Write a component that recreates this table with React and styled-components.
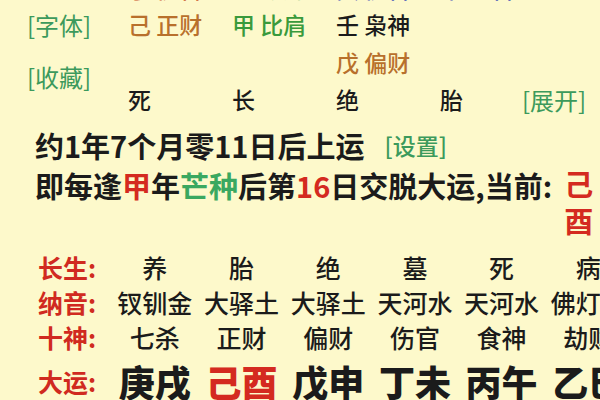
import React from "react";
import styled, { createGlobalStyle } from "styled-components";

const Global = createGlobalStyle`
  html, body { margin: 0; padding: 0; background: #fdf9cb; }
  body { overflow: hidden; }
`;

const Page = styled.div`
  width: 600px;
  height: 400px;
  overflow: hidden;
  background: #fdf9cb;
  font-family: "Noto Sans CJK SC", "Noto Sans", sans-serif;
  color: #1b1b1b;
`;

const PillarGrid = styled.div`
  display: grid;
  grid-template-columns: 101px 104px 104px 104px 80px 1fr;
  grid-template-rows: 26px 37.5px 37.5px 37.5px;
  padding-left: 27px;
  margin-top: -20px;
`;

const Cell = styled.div`
  grid-column: ${(p) => p.$col};
  grid-row: ${(p) => p.$row};
  font-size: 23px;
  line-height: ${(p) => (p.$cut ? "22px" : "37.5px")};
  align-self: ${(p) => (p.$cut ? "end" : "stretch")};
  margin-bottom: ${(p) => (p.$cut ? "7px" : "0")};
  font-weight: 500;
  white-space: nowrap;
  color: ${(p) => p.$color || "#1b1b1b"};
`;

const LinkTag = styled.div`
  grid-column: ${(p) => p.$col || 1};
  grid-row: ${(p) => p.$row};
  align-self: center;
  margin: ${(p) => p.$margin || "0"};
  font-size: 24px;
  line-height: 28px;
  color: #3c9a5c;
  white-space: nowrap;
`;

const Info = styled.div`
  padding-left: 35px;
  margin-top: 6px;
  font-size: 29px;
  font-weight: 700;
  line-height: 40px;
`;

const InfoLine = styled.div`
  display: flex;
  align-items: flex-start;
  white-space: nowrap;
  height: 40px;
`;

const Setting = styled.span`
  font-size: 23px;
  font-weight: 500;
  color: #3c9a5c;
  margin-left: 20px;
`;

const Hi = styled.span`
  color: ${(p) => p.$color};
`;

const Current = styled.span`
  display: flex;
  flex-direction: column;
  color: #d42a20;
  line-height: 37px;
  margin-left: 12px;
`;

const Table = styled.div`
  display: grid;
  grid-template-columns: 73.5px repeat(6, 86.7px);
  grid-template-rows: 35px 35px 35px 53px;
  padding-left: 38px;
  margin-top: 45px;
  align-items: center;
`;

const Label = styled.div`
  font-size: 25px;
  font-weight: 700;
  color: #d02a20;
  white-space: nowrap;
`;

const Value = styled.div`
  justify-self: center;
  white-space: nowrap;
  font-size: ${(p) => (p.$big ? "36px" : "25px")};
  font-weight: ${(p) => (p.$big ? 800 : 500)};
  color: ${(p) => p.$color || "#1b1b1b"};
`;

const orange = "#b8702c";
const green = "#3a9a3c";
const blue = "#3d52b8";
const red = "#d42a20";

const tableRows = [
  { label: "长生:", values: ["养", "胎", "绝", "墓", "死", "病"] },
  { label: "纳音:", values: ["钗钏金", "大驿土", "大驿土", "天河水", "天河水", "佛灯火"] },
  { label: "十神:", values: ["七杀", "正财", "偏财", "伤官", "食神", "劫财"] },
  { label: "大运:", values: ["庚戌", "己酉", "戊申", "丁未", "丙午", "乙巳"], big: true },
];

export default function App() {
  return (
    <Page>
      <Global />
      <PillarGrid>
        <Cell $col={2} $row={1} $cut $color="#c9552a">丁 伤官</Cell>
        <Cell $col={3} $row={1} $cut $color="#6aa86a">乙 劫财</Cell>
        <Cell $col={4} $row={1} $cut $color={blue}>癸 伤官</Cell>
        <Cell $col={5} $row={1} $cut $color={blue}>辛 正官</Cell>

        <LinkTag $row={2}>[字体]</LinkTag>
        <Cell $col={2} $row={2} $color={orange}>己 正财</Cell>
        <Cell $col={3} $row={2} $color={green}>甲 比肩</Cell>
        <Cell $col={4} $row={2}>壬 枭神</Cell>

        <Cell $col={4} $row={3} $color={orange}>戊 偏财</Cell>
        <LinkTag $row="3 / 5" $margin="0 0 8px 0">[收藏]</LinkTag>

        <Cell $col={2} $row={4}>死</Cell>
        <Cell $col={3} $row={4}>长</Cell>
        <Cell $col={4} $row={4}>绝</Cell>
        <Cell $col={5} $row={4}>胎</Cell>
        <LinkTag $row={4} $col={6} $margin="0 0 0 2px">[展开]</LinkTag>
      </PillarGrid>

      <Info>
        <InfoLine>
          约1年7个月零11日后上运<Setting>[设置]</Setting>
        </InfoLine>
        <InfoLine>
          即每逢<Hi $color={red}>甲</Hi>年<Hi $color="#3aa860">芒种</Hi>后第<Hi $color={red}>16</Hi>日交脱大运,当前:
          <Current>
            <span>己</span>
            <span>酉</span>
          </Current>
        </InfoLine>
      </Info>

      <Table>
        {tableRows.map((r) => (
          <React.Fragment key={r.label}>
            <Label>{r.label}</Label>
            {r.values.map((v, i) => (
              <Value key={i} $big={r.big} $color={r.big && i === 1 ? red : undefined}>
                {v}
              </Value>
            ))}
          </React.Fragment>
        ))}
      </Table>
    </Page>
  );
}
